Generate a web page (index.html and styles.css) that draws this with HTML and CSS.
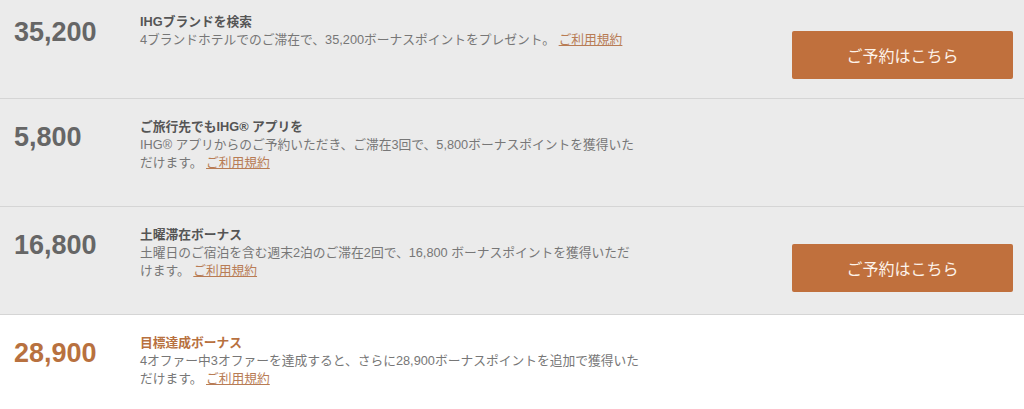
FILE: index.html
```html
<!DOCTYPE html>
<html lang="ja">
<head>
    <meta charset="UTF-8">
    <meta name="viewport" content="width=device-width, initial-scale=1.0">
    <title>ボーナスポイント</title>
    <link rel="stylesheet" href="styles.css">
</head>
<body>
    <div class="offers">
        <div class="offer">
            <div class="points">35,200</div>
            <div class="info">
                <h3>IHGブランドを検索</h3>
                <p>4ブランドホテルでのご滞在で、35,200ボーナスポイントをプレゼント。 <a href="#">ご利用規約</a></p>
            </div>
            <a class="book" href="#">ご予約はこちら</a>
        </div>
        <div class="offer">
            <div class="points">5,800</div>
            <div class="info">
                <h3>ご旅行先でもIHG® アプリを</h3>
                <p>IHG® アプリからのご予約いただき、ご滞在3回で、5,800ボーナスポイントを獲得いただけます。 <a href="#">ご利用規約</a></p>
            </div>
        </div>
        <div class="offer">
            <div class="points">16,800</div>
            <div class="info">
                <h3>土曜滞在ボーナス</h3>
                <p>土曜日のご宿泊を含む週末2泊のご滞在2回で、16,800 ボーナスポイントを獲得いただけます。 <a href="#">ご利用規約</a></p>
            </div>
            <a class="book" href="#">ご予約はこちら</a>
        </div>
        <div class="offer goal">
            <div class="points">28,900</div>
            <div class="info">
                <h3>目標達成ボーナス</h3>
                <p>4オファー中3オファーを達成すると、さらに28,900ボーナスポイントを追加で獲得いただけます。 <a href="#">ご利用規約</a></p>
            </div>
        </div>
    </div>
</body>
</html>
```

FILE: styles.css
```css
body {
    margin: 0;
    font-family: "Liberation Sans", "Noto Sans CJK JP", sans-serif;
    color: #777;
    background: #fff;
}

.offers {margin-top: -6px;}

.offer {
    display: flex;
    align-items: flex-start;
    padding: 19px 11px 19px 14px;
    background: #ebebeb;
    border-bottom: 1px solid #d5d5d5;
}
.offer.goal {
    background: #fff;
    border-bottom: none;
}

.points {
    width: 126px;
    flex: none;
    margin-top: 3px;
    font-size: 27px;
    line-height: 32px;
    font-weight: bold;
    color: #666;
}
.goal .points {color: #b8713f;}

.info {
    width: 499px;
    margin-bottom: 15px;
}
.info h3 {
    margin: 0;
    font-size: 12.75px;
    line-height: 18px;
    font-weight: bold;
    color: #555;
}
.goal .info h3 {color: #b8713f;}
.info p {
    margin: 0;
    font-size: 12.75px;
    line-height: 18px;
    color: #777;
}
.info a {
    color: #b87c55;
    text-decoration: underline;
}

.book {
    margin: 18px 0 0 auto;
    width: 221px;
    height: 48px;
    display: flex;
    align-items: center;
    justify-content: center;
    background: #c0703d;
    border-radius: 2px;
    color: #fdf3ea;
    font-size: 16px;
    text-decoration: none;
}
```
